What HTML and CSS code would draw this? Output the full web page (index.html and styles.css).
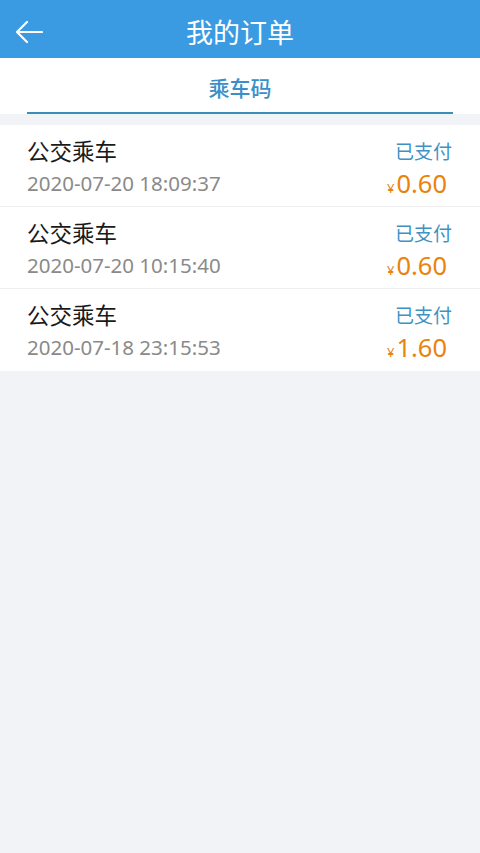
FILE: index.html
```html
<!DOCTYPE html>
<html lang="zh">
<head>
<meta charset="utf-8">
<link rel="stylesheet" href="styles.css">
</head>
<body>
<header class="topbar">
  <svg class="back" width="28" height="24" viewBox="0 0 28 24"><path d="M27 12H2M12 2L2 12l10 10" fill="none" stroke="#fff" stroke-width="2.2" stroke-linecap="round" stroke-linejoin="round"/></svg>
  <h1 class="title">我的订单</h1>
</header>
<nav class="tabs">
  <div class="tab">乘车码</div>
</nav>
<ul class="list">
  <li class="row">
    <div class="left"><div class="name">公交乘车</div><div class="date">2020-07-20 18:09:37</div></div>
    <div class="right"><div class="status">已支付</div><div class="price"><span class="yen">¥</span>0.60</div></div>
  </li>
  <li class="row">
    <div class="left"><div class="name">公交乘车</div><div class="date">2020-07-20 10:15:40</div></div>
    <div class="right"><div class="status">已支付</div><div class="price"><span class="yen">¥</span>0.60</div></div>
  </li>
  <li class="row">
    <div class="left"><div class="name">公交乘车</div><div class="date">2020-07-18 23:15:53</div></div>
    <div class="right"><div class="status">已支付</div><div class="price"><span class="yen">¥</span>1.60</div></div>
  </li>
</ul>
</body>
</html>
```
FILE: styles.css
```css
html, body { margin: 0; padding: 0; }
body {
  background: #f1f3f7;
  font-family: "Noto Sans CJK SC", "Noto Sans", sans-serif;
  width: 480px;
  min-height: 853px;
}
.topbar {
  height: 58px;
  background: #3a9be3;
  display: flex;
  align-items: center;
  justify-content: center;
  position: relative;
}
.back { position: absolute; left: 15px; top: 20px; }
.title {
  margin: 0;
  color: #fff;
  font-size: 27px;
  font-weight: 400;
  line-height: 1;
  padding-top: 4px;
}
.tabs {
  background: #fff;
  height: 56px;
  padding: 0 27px;
}
.tab {
  border-bottom: 2px solid #3a8fb9;
  display: flex;
  align-items: center;
  justify-content: center;
  color: #3a8fc9;
  font-size: 21px;
  font-weight: 500;
  padding-top: 4px;
  box-sizing: border-box;
  height: 56px;
}
.list {
  list-style: none;
  margin: 11px 0 0;
  padding: 0;
  background: #fff;
}
.row {
  height: 82px;
  box-sizing: border-box;
  padding: 11px 28px 0 27px;
  display: flex;
  justify-content: space-between;
  align-items: flex-start;
  border-bottom: 1px solid #eeeeee;
}
.row:last-child { border-bottom: none; }
.left, .right { display: flex; flex-direction: column; }
.right { align-items: flex-end; }
.name { font-size: 22.5px; color: #1a1a1a; line-height: 28px; }
.date { font-size: 20.5px; color: #8a8a8a; line-height: 38px; font-family: "Noto Sans", "Open Sans", sans-serif; }
.status { font-size: 19px; color: #3f92c4; line-height: 30px; }
.price { font-size: 25.5px; color: #e9830e; line-height: 32px; margin-top: 1px; font-family: "Noto Sans", sans-serif; margin-right: 5px; }
.yen { font-size: 13px; margin-right: 2px; }
```
